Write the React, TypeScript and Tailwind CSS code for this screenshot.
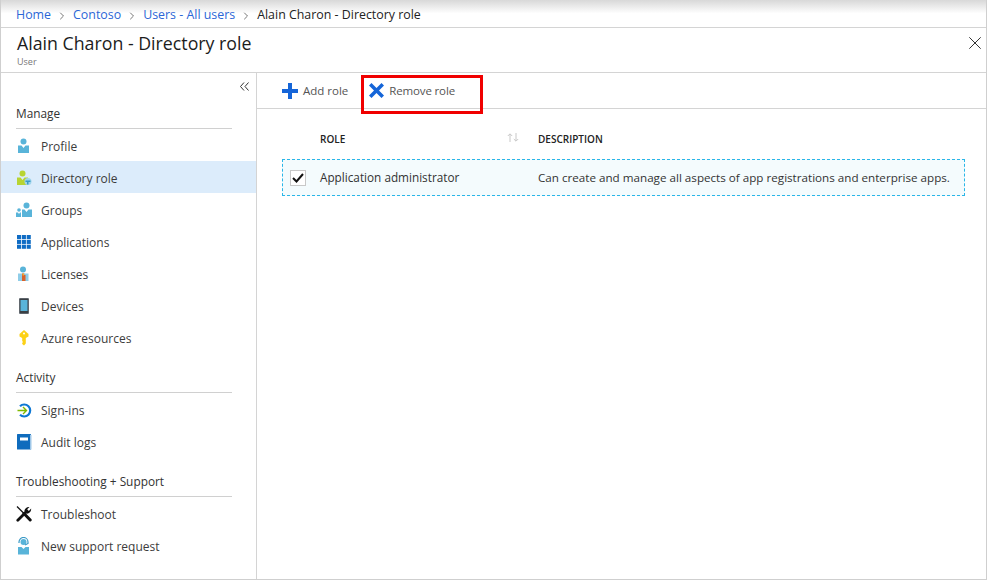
import React from 'react';
import { ChevronRight } from 'lucide-react';

const ProfileIcon = () => (
  <svg width="16" height="16" viewBox="0 0 16 16">
    <circle cx="7.5" cy="3.5" r="3" fill="#59b4d9" />
    <path d="M2 7.5h3.5L7.5 10l2-2.5H13V15H2z" fill="#59b4d9" />
  </svg>
);

const DirectoryIcon = () => (
  <svg width="16" height="16" viewBox="0 0 16 16">
    <circle cx="6.5" cy="3.5" r="3" fill="#b8d432" />
    <path d="M1 7.5h3.5L6.5 10l2-2.5H12V15H1z" fill="#b8d432" />
    <circle cx="12" cy="11.500" r="3.500" fill="#9fd4ec" />
    <path d="M9.500 10.500h5v1.500h-2v2.500h-1.500V12h-1.500z" fill="#3999c6" />
  </svg>
);

const GroupsIcon = () => (
  <svg width="16" height="16" viewBox="0 0 16 16">
    <circle cx="10.5" cy="3.5" r="3" fill="#59b4d9" />
    <path d="M6 7.5h2.5l2 2.5 2-2.5H16V15H6z" fill="#59b4d9" />
    <circle cx="3" cy="8" r="1.8" fill="#59b4d9" />
    <path d="M0 10.500h2l1 1.500 1-1.500h1V15H0z" fill="#59b4d9" />
  </svg>
);

const AppsIcon = () => (
  <svg width="14" height="14" viewBox="0 0 13 13" fill="#0f6cc4">
    {[0, 4.5, 9].map((y) =>
      [0, 4.5, 9].map((x) => <rect key={`${x}-${y}`} x={x} y={y} width="3.8" height="3.8" />),
    )}
  </svg>
);

const LicensesIcon = () => (
  <svg width="16" height="16" viewBox="0 0 16 16">
    <circle cx="7" cy="3.5" r="3" fill="#59b4d9" />
    <path d="M2 7.5h10.500V15H2z" fill="#8fcde8" />
    <path d="M6 7.500h2.500L8 9h1.500v6H6z" fill="#d9622b" />
    <rect x="6.500" y="7.500" width="1.500" height="2" fill="#f2b233" />
  </svg>
);

const DeviceIcon = () => (
  <svg width="10" height="16" viewBox="0 0 10 16">
    <rect width="10" height="16" rx="1" fill="#6b7278" />
    <rect x="0.800" y="0.800" width="8.400" height="14.400" rx="0.500" fill="#3a3f44" />
    <rect x="1.500" y="2" width="7" height="11" fill="#59b4d9" />
  </svg>
);

const KeyIcon = () => (
  <svg width="10" height="16" viewBox="0 0 10 16">
    <path
      fillRule="evenodd"
      d="M5 0 9.500 4v2.500L6.800 8v5.500L5 15.500l-1.800-1.500v-1.200l1-.8-1-.8V8L.5 6.500V4zM5 2.500a1 1 0 1 0 0 2 1 1 0 0 0 0-2z"
      fill="#fcd116"
    />
  </svg>
);

const SignInIcon = () => (
  <svg width="15" height="15" viewBox="0 0 15 15" fill="none">
    <path d="M3 3.2a6 6 0 1 1 0 8.6" stroke="#0f78d4" strokeWidth="2.2" />
    <path d="M0.5 7.5h8.5M6 4l3.5 3.5L6 11" stroke="#7fba00" strokeWidth="1.4" />
  </svg>
);

const BookIcon = () => (
  <svg width="15" height="16" viewBox="0 0 15 16">
    <rect width="14" height="15.5" rx="0.5" fill="#0f6cbd" />
    <rect x="13" y="1" width="1.5" height="14.5" fill="#9fc7e8" />
    <rect x="3" y="3.5" width="8" height="3" fill="#ffffff" />
  </svg>
);

const ToolsIcon = () => (
  <svg width="16" height="16" viewBox="0 0 16 16" fill="none" stroke="#111">
    {/* screwdriver */}
    <path d="M1 .5 8 7.500" strokeWidth="1.300" />
    <path d="M8 7.500 14.200 14" strokeWidth="3" strokeLinecap="round" />
    {/* wrench */}
    <path d="M1.800 14.200 9.500 6.500" strokeWidth="2.800" strokeLinecap="round" />
    <path d="M8.500 5.500c-.3-2.500 2-5 5-4.500l-2.300 2.300 1.600 1.600 2.300-2.300c.5 3-2 5.300-4.500 5z" fill="#111" stroke="none" />
  </svg>
);

const SupportIcon = () => (
  <svg width="14" height="18" viewBox="0 0 14 18">
    <circle cx="6.500" cy="5" r="3" fill="#59b4d9" />
    <path d="M2 6V5a4.500 4.500 0 0 1 9 0v1.500L8 8" fill="none" stroke="#3999c6" strokeWidth="1.200" />
    <path d="M1 10h3.500l2 2 2-2H12v7.500H1z" fill="#59b4d9" />
  </svg>
);

const manageItems = [
  { label: 'Profile', icon: <ProfileIcon /> },
  { label: 'Directory role', icon: <DirectoryIcon />, active: true },
  { label: 'Groups', icon: <GroupsIcon /> },
  { label: 'Applications', icon: <AppsIcon /> },
  { label: 'Licenses', icon: <LicensesIcon /> },
  { label: 'Devices', icon: <DeviceIcon /> },
  { label: 'Azure resources', icon: <KeyIcon /> },
];

const activityItems = [
  { label: 'Sign-ins', icon: <SignInIcon /> },
  { label: 'Audit logs', icon: <BookIcon /> },
];

const supportItems = [
  { label: 'Troubleshoot', icon: <ToolsIcon /> },
  { label: 'New support request', icon: <SupportIcon /> },
];

type Item = { label: string; icon: React.ReactNode; active?: boolean };

const NavSection = ({ title, items }: { title: string; items: Item[] }) => (
  <div>
    <div className="mr-6 ml-[15px] flex h-10 items-end border-b border-[#d0d0d0] pb-[5px] text-[11.85px] leading-5 font-medium text-[#333]">
      {title}
    </div>
    {items.map((item) => (
      <div
        key={item.label}
        className={`flex h-8 items-center pt-[2px] text-[12px] text-[#3c3c3c] ${item.active ? 'bg-[#dcecfb]' : ''}`}
      >
        <span className="ml-[15px] flex w-4 justify-center">{item.icon}</span>
        <span className="mt-[2px] ml-[9px]">{item.label}</span>
      </div>
    ))}
  </div>
);

const crumbChevron = 'mx-[5px] h-3 w-3 text-[#777]';

export default function App() {
  return (
    <div className="relative flex h-[580px] w-[987px] flex-col overflow-hidden border-x border-b border-[#cfcfcf] bg-white font-['Open_Sans',sans-serif]">
      {/* Breadcrumb */}
      <div className="flex h-[28px] shrink-0 items-center border-b border-[#d4d4d4] bg-gradient-to-b from-[#d8d8d8] via-white via-50% to-white pt-1 pl-[15px] text-[12.4px] text-[#2b66d6]">
        <span>Home</span>
        <ChevronRight className={crumbChevron} />
        <span>Contoso</span>
        <ChevronRight className={crumbChevron} />
        <span>Users - All users</span>
        <ChevronRight className={crumbChevron} />
        <span className="text-[#222]">Alain Charon - Directory role</span>
      </div>

      {/* Blade title */}
      <div className="flex h-[45px] shrink-0 justify-between border-b border-[#d4d4d4] pr-[5px] pl-4">
        <div>
          <div className="mt-[3px] text-[17.75px] leading-6 text-[#1c1c1c]">Alain Charon - Directory role</div>
          <div className="mt-px text-[9px] leading-3 text-[#777]">User</div>
        </div>
        <svg className="mt-[9px]" width="12" height="12" viewBox="0 0 12 12" fill="none" stroke="#333" strokeWidth="1">
          <path d="M0.3 0.3l11.4 11.4M11.7 0.3 0.3 11.7" />
        </svg>
      </div>

      <div className="flex min-h-0 flex-1">
        {/* Sidebar */}
        <div className="relative w-[256px] shrink-0 border-r border-[#d4d4d4] pt-4">
          <svg className="absolute top-[9px] left-[239px]" width="9" height="9" viewBox="0 0 9 9" fill="none" stroke="#333" strokeWidth="1">
            <path d="M4 0.5 0.5 4.5 4 8.5M8.5 0.5 5 4.5l3.5 4" />
          </svg>
          <NavSection title="Manage" items={manageItems} />
          <NavSection title="Activity" items={activityItems} />
          <NavSection title="Troubleshooting + Support" items={supportItems} />
        </div>

        {/* Content */}
        <div className="min-w-0 flex-1">
          <div className="flex h-[36px] items-center border-b border-[#d4d4d4] pl-[25px] text-[11.5px] text-[#555]">
            <svg width="16" height="16" viewBox="0 0 16 16" fill="#1565d8">
              <path d="M6 0h4v6h6v4h-6v6H6v-6H0V6h6z" />
            </svg>
            <span className="mt-px ml-[5px]">Add role</span>
            <svg className="ml-[21px]" width="15" height="15" viewBox="0 0 15 15" fill="#1565d8">
              <path d="M2.5 0 7.5 5l5-5L15 2.5l-5 5 5 5-2.5 2.5-5-5-5 5L0 12.5l5-5-5-5z" />
            </svg>
            <span className="mt-px ml-[5px] tracking-[-0.15px]">Remove role</span>
          </div>

          <div className="mr-[21px] ml-[25px]">
            <div className="flex h-[50px] items-center pt-[10px] text-[10px] font-semibold text-[#222]">
              <span className="ml-[38px] w-[187px]">ROLE</span>
              <span className="w-[31px]">
                <svg className="mt-[-3px] block" width="12" height="9" viewBox="0 0 12 9" fill="none" stroke="#c8c8c8" strokeWidth="1">
                  <path d="M3 9V1M0.8 3 3 0.8 5.2 3M9 0v8M6.8 6 9 8.2 11.2 6" />
                </svg>
              </span>
              <span>DESCRIPTION</span>
            </div>
            <div className="flex h-[37px] items-center border border-dashed border-[#29b6e8] bg-[#f4fbfd] text-[#333]">
              <span className="ml-[7px] flex h-4 w-4 items-center justify-center border border-[#c8c8c8] bg-white">
                <svg width="12" height="10" viewBox="0 0 12 10" fill="none" stroke="#111" strokeWidth="2">
                  <path d="M1 5l3.5 3.5L11 1" />
                </svg>
              </span>
              <span className="ml-[14px] w-[218px] text-[11.75px]">Application administrator</span>
              <span className="text-[11.65px]">Can create and manage all aspects of app registrations and enterprise apps.</span>
            </div>
          </div>
        </div>
      </div>

      {/* Red annotation */}
      <div className="absolute top-[75px] left-[360px] h-[39px] w-[122px] border-[3px] border-[#f00000]" />
    </div>
  );
}
